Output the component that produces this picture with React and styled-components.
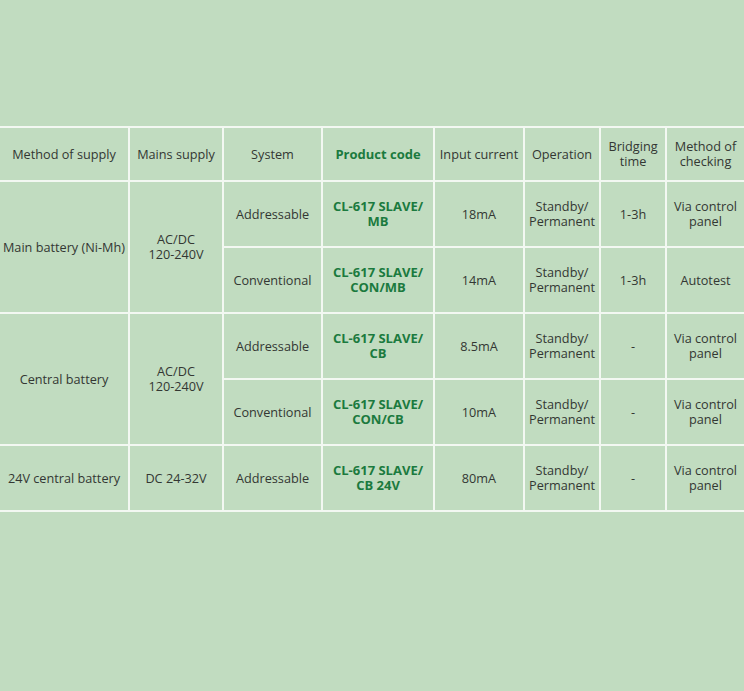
import React from "react";
import styled, { createGlobalStyle } from "styled-components";

const GlobalStyle = createGlobalStyle`
  html, body {
    margin: 0;
    padding: 0;
    background: #c1dcc0;
  }
`;

const Page = styled.div`
  width: 744px;
  height: 691px;
  padding-top: 126px;
  box-sizing: border-box;
  background: #c1dcc0;
  font-family: "Open Sans", "Liberation Sans", sans-serif;
  color: #333733;
`;

const Table = styled.table`
  width: 744px;
  table-layout: fixed;
  border-collapse: collapse;
  font-size: 12.7px;
  line-height: 15px;
`;

const Cell = styled.td`
  border: 2px solid #f3f8f2;
  padding: 0 2px;
  text-align: center;
  vertical-align: middle;
  height: ${(p) => (p.$head ? 52 : 64)}px;
  color: ${(p) => (p.$code ? "#1b7a3e" : "#333733")};
  font-weight: ${(p) => (p.$code ? 700 : 400)};
  font-size: ${(p) => (p.$code ? "13px" : "inherit")};

  &:first-child {
    border-left: none;
  }
  &:last-child {
    border-right: none;
  }
`;

const widths = [129, 94, 99, 112, 90, 76, 66, 78];

const headers = [
  "Method of supply",
  "Mains supply",
  "System",
  "Product code",
  "Input current",
  "Operation",
  ["Bridging", "time"],
  ["Method of", "checking"],
];

const lines = (v) =>
  Array.isArray(v)
    ? v.map((l, i) => (
        <React.Fragment key={i}>
          {i > 0 && <br />}
          {l}
        </React.Fragment>
      ))
    : v;

const rows = [
  {
    supply: "Main battery (Ni-Mh)",
    mains: ["AC/DC", "120-240V"],
    span: 2,
    system: "Addressable",
    code: ["CL-617 SLAVE/", "MB"],
    current: "18mA",
    bridging: "1-3h",
    check: ["Via control", "panel"],
  },
  {
    system: "Conventional",
    code: ["CL-617 SLAVE/", "CON/MB"],
    current: "14mA",
    bridging: "1-3h",
    check: "Autotest",
  },
  {
    supply: "Central battery",
    mains: ["AC/DC", "120-240V"],
    span: 2,
    system: "Addressable",
    code: ["CL-617 SLAVE/", "CB"],
    current: "8.5mA",
    bridging: "-",
    check: ["Via control", "panel"],
  },
  {
    system: "Conventional",
    code: ["CL-617 SLAVE/", "CON/CB"],
    current: "10mA",
    bridging: "-",
    check: ["Via control", "panel"],
  },
  {
    supply: "24V central battery",
    mains: "DC 24-32V",
    span: 1,
    system: "Addressable",
    code: ["CL-617 SLAVE/", "CB 24V"],
    current: "80mA",
    bridging: "-",
    check: ["Via control", "panel"],
  },
];

export default function App() {
  return (
    <Page>
      <GlobalStyle />
      <Table>
        <colgroup>
          {widths.map((w, i) => (
            <col key={i} style={{ width: w }} />
          ))}
        </colgroup>
        <tbody>
          <tr>
            {headers.map((h, i) => (
              <Cell key={i} $head $code={i === 3}>
                {lines(h)}
              </Cell>
            ))}
          </tr>
          {rows.map((r, i) => (
            <tr key={i}>
              {r.supply && <Cell rowSpan={r.span}>{r.supply}</Cell>}
              {r.mains && <Cell rowSpan={r.span}>{lines(r.mains)}</Cell>}
              <Cell>{r.system}</Cell>
              <Cell $code>{lines(r.code)}</Cell>
              <Cell>{r.current}</Cell>
              <Cell>{lines(["Standby/", "Permanent"])}</Cell>
              <Cell>{r.bridging}</Cell>
              <Cell>{lines(r.check)}</Cell>
            </tr>
          ))}
        </tbody>
      </Table>
    </Page>
  );
}
